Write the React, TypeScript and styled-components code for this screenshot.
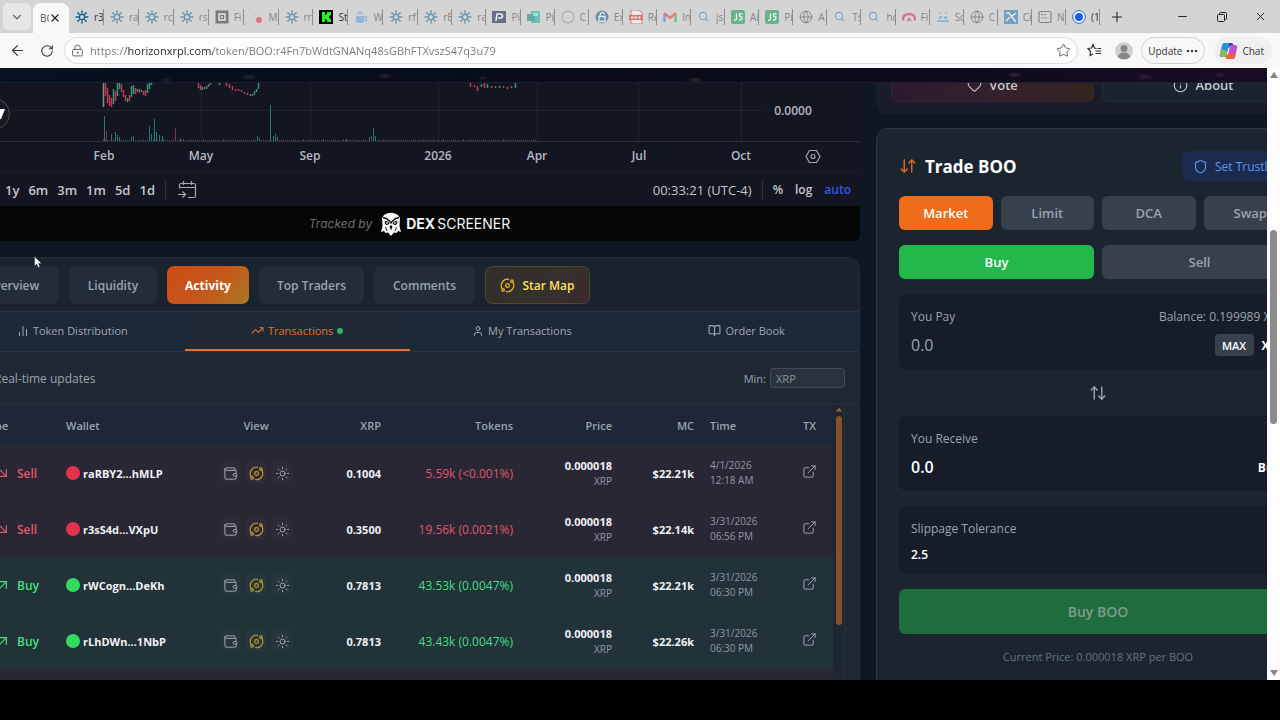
import React from 'react';
import styled, { createGlobalStyle, css } from 'styled-components';
import {
  ArrowDownRight, ArrowDownUp, ArrowLeft, ArrowUpDown, ArrowUpRight, BookOpen, ChartNoAxesColumn,
  ChevronDown, ExternalLink, Globe, Heart, Info, LockKeyhole, Minus, Orbit, Plus, RotateCw, Search,
  Shield, Star, Sun, TrendingUp, User, Wallet, X,
} from 'lucide-react';

const Global = createGlobalStyle`
  *, *::before, *::after { box-sizing: border-box; }
  body { margin: 0; background: #000; font-family: 'Open Sans', 'Noto Sans', sans-serif; }
  button, input { font-family: inherit; margin: 0; }
  button { border: 0; padding: 0; background: none; color: inherit; cursor: pointer; }
  svg { display: block; flex: none; }
`;

/* ---------- window ---------- */

const Desktop = styled.div`
  height: 100vh;
  padding-bottom: 40px;
  background: #000;
  overflow: hidden;
`;
const Window = styled.div`
  height: 100%;
  display: flex;
  flex-direction: column;
  overflow: hidden;
`;
const TabStrip = styled.div`
  flex: none;
  display: flex;
  align-items: stretch;
  height: 33px;
  padding-left: 3px;
  background: #d4d4d4;
`;
const TabMenu = styled.button`
  flex: none;
  width: 28px;
  height: 27px;
  margin: 3px 2px 0 0;
  border-radius: 5px;
  background: #e6e6e6;
  color: #333;
  display: grid;
  place-items: center;
`;
const TabLabel = styled.span`
  font-size: 10px;
  line-height: 16px;
  overflow: hidden;
  white-space: nowrap;
`;
const ActiveTab = styled.div`
  flex: none;
  width: 36px;
  margin-top: 3px;
  padding: 0 8px 0 7px;
  display: flex;
  align-items: center;
  justify-content: space-between;
  border-radius: 8px 8px 0 0;
  background: #f8f8f8;
  color: #555;
  ${TabLabel} { width: 9px; }
`;
const Tabs = styled.div`
  flex: 1;
  min-width: 0;
  display: flex;
`;
const Tab = styled.button<{ $grow: number; $awake?: boolean }>`
  flex: ${p => p.$grow} 1 0;
  min-width: 0;
  display: flex;
  align-items: center;
  padding-left: 6px;
  color: ${p => (p.$awake ? '#333' : '#858585')};
  > svg { opacity: ${p => (p.$awake ? 1 : 0.55)}; }
  ${TabLabel} {
    flex: 1;
    margin-left: 5px;
    border-right: 1px solid #8e8e8e;
    text-align: left;
  }
`;
const WindowButtons = styled.div`
  flex: none;
  display: flex;
  align-items: center;
  width: 180px;
  color: #222;
  button { flex: 39; height: 33px; display: grid; place-items: center; }
  button:first-child { flex: 34; margin-right: 29px; }
`;
const Toolbar = styled.div`
  flex: none;
  display: flex;
  align-items: center;
  height: 35px;
  padding: 0 8px 0 9px;
  background: #f8f8f8;
  color: #333;
`;
const ToolButton = styled.button`
  width: 16px;
  height: 24px;
  margin-right: 14px;
  display: grid;
  place-items: center;
`;
const Address = styled.label`
  flex: 1;
  display: flex;
  align-items: center;
  gap: 6px;
  height: 27px;
  padding: 0 6px;
  border: 1px solid #dcdcdc;
  border-radius: 14px;
  background: #fdfdfd;
  color: #666;
  margin: 0 9px 0 -5px;
`;
const AddressInput = styled.input`
  flex: 1;
  border: 0;
  outline: 0;
  padding: 0;
  font-size: 11px;
  height: 20px;
  color: #666;
  background: linear-gradient(to right, #777 0 36px, #222 36px 123px, #777 123px);
  -webkit-background-clip: text;
  background-clip: text;
  -webkit-text-fill-color: transparent;
`;
const ProfileTools = styled.div`
  display: flex;
  align-items: center;
  gap: 13px;
`;
const Pill = styled.button<{ $outlined?: boolean }>`
  height: 27px;
  display: flex;
  align-items: center;
  gap: 4px;
  border-radius: 14px;
  font-size: 10px;
  color: #333;
  ${p => (p.$outlined
    ? css`border: 1px solid #cfcfcf; margin: 0 9px 0 8px; padding: 0 6px;`
    : css`background: #f0f0f0; padding: 0 8px 0 5px;`)}
`;

/* ---------- page ---------- */

const Viewport = styled.div`
  flex: 1;
  min-height: 0;
  display: flex;
`;
const Page = styled.main`
  flex: 1;
  min-width: 0;
  overflow: hidden;
  background: #0e1724;
  color: #9ca3af;
`;
const SiteHeader = styled.div`
  height: 15px;
  border-bottom: 1px solid #1b2130;
  background:
    radial-gradient(ellipse 9px 3px at 250px 9px, #242838, transparent),
    radial-gradient(ellipse 7px 3px at 166px 12px, #1c2434, transparent),
    radial-gradient(ellipse 8px 3px at 385px 8px, #2a272e, transparent),
    radial-gradient(ellipse 8px 3px at 695px 12px, #3a2c2a, transparent),
    radial-gradient(ellipse 6px 2px at 483px 10px, #22242f, transparent),
    radial-gradient(ellipse 8px 3px at 1014px 7px, #36243c, transparent),
    radial-gradient(ellipse 10px 4px at 1145px 9px, #301f36, transparent),
    radial-gradient(ellipse 6px 3px at 1220px 7px, #321f36, transparent),
    linear-gradient(to right, #07111f, #080c19 45%, #0c0a1a 70%, #190d24);
`;
const Columns = styled.div`
  display: flex;
  gap: 16px;
  margin: 0 -53px 0 -41px;
`;
const MainColumn = styled.div`
  flex: 1;
  min-width: 0;
`;
const SideColumn = styled.aside`
  flex: none;
  width: 444px;
`;

/* chart */
const ChartFrame = styled.section`
  background: #131520;
  border-radius: 0 0 6px 6px;
  overflow: hidden;
`;
const ChartSvg = styled.svg`
  width: 100%;
  height: 89px;
  text { font-family: 'Open Sans', sans-serif; font-size: 12px; font-weight: 600; fill: #b5b8c1; text-anchor: middle; }
`;
const RangeBar = styled.div`
  display: flex;
  align-items: center;
  height: 34px;
  padding: 0 9px 0 46px;
  border-top: 1px solid #1d202b;
  font-size: 13px;
  font-weight: 500;
  color: #c2c5cd;
`;
const RangeSet = styled.div`
  display: flex;
  gap: 9px;
`;
const RangeButton = styled.button`
  font-size: 13px;
  font-weight: 600;
`;
const ScaleSet = styled.div`
  display: flex;
  align-items: center;
  gap: 12px;
`;
const ScaleButton = styled.button<{ $active?: boolean }>`
  font-size: 12px;
  font-weight: 600;
  color: ${p => (p.$active ? '#3558e8' : 'inherit')};
`;
const Divider = styled.span`
  width: 1px;
  height: 20px;
  margin: 0 10px;
  background: #2d303b;
`;
const Spring = styled.span`flex: 1;`;
const Tracked = styled.div`
  display: flex;
  align-items: center;
  justify-content: center;
  height: 35px;
  background: #050505;
  font-family: Inter, sans-serif;
  font-size: 14px;
  color: #f4f4f4;
  em { font-size: 12px; color: #6f6f6f; margin-right: 9px; }
  svg { margin-right: 5px; }
  span { margin-left: 2px; }
`;

/* activity card */
const Card = styled.section`
  margin-top: 16px;
  border: 1px solid #212e3a;
  border-radius: 12px 12px 0 0;
  background: #1e2832;
  overflow: hidden;
`;
const SectionTabs = styled.nav`
  display: grid;
  grid-template-columns: 94px 88px 82px 105px 101px 105px;
  gap: 10px;
  height: 54px;
  padding: 8px 5px;
  background: #1a242f;
  border-bottom: 1px solid #2a3541;
`;
const SectionTab = styled.button<{ $look?: 'active' | 'star' }>`
  height: 38px;
  display: flex;
  align-items: center;
  justify-content: center;
  gap: 7px;
  border-radius: 7px;
  font-size: 12px;
  font-weight: 600;
  white-space: nowrap;
  background: #232d39;
  color: #9aa2ae;
  ${p => p.$look === 'active' && css`background: linear-gradient(135deg, #cf4a15, #c4581c 55%, #a87a22); color: #fff; font-weight: 700;`}
  ${p => p.$look === 'star' && css`background: linear-gradient(135deg, #322e2b, #34312c 60%, #3d292d); border: 1px solid #4c4632; color: #fbe068; svg { color: #e8b31a; }`}
`;
const SubTabs = styled.nav`
  display: grid;
  grid-template-columns: repeat(4, 1fr);
  height: 40px;
  background: #1c2737;
  border-bottom: 1px solid #2a3440;
`;
const SubTab = styled.button<{ $active?: boolean }>`
  display: flex;
  align-items: center;
  justify-content: center;
  gap: 4px;
  font-size: 11px;
  font-weight: 500;
  color: #a0a8b5;
  border-bottom: 2px solid transparent;
  ${p => p.$active && css`background: #1f2935; color: #e0712a; border-color: #d9733a;`}
`;
const LiveDot = styled.i`
  width: 6px;
  height: 6px;
  border-radius: 50%;
  background: #32b460;
`;
const Filter = styled.div`
  display: flex;
  align-items: center;
  justify-content: space-between;
  height: 53px;
  padding: 0 14px 0 34px;
  font-size: 12px;
  border-bottom: 1px solid #28323c;
  label { display: flex; align-items: center; gap: 4px; font-size: 11px; }
  input {
    width: 75px;
    height: 20px;
    padding: 0 5px;
    border: 1px solid #414b57;
    border-radius: 3px;
    background: #28333e;
    font-size: 11px;
    color: #ddd;
  }
  input::placeholder { color: #8b939f; opacity: 1; }
`;
const TableArea = styled.div`
  display: flex;
  padding: 0 14px 0 15px;
`;
const Table = styled.table`
  flex: 1;
  min-width: 0;
  table-layout: fixed;
  border-collapse: collapse;
  font-size: 11px;
  font-weight: 600;
`;
const Th = styled.th<{ $align?: string; $w?: number }>`
  width: ${p => (p.$w ? `${p.$w}px` : 'auto')};
  height: 40px;
  padding: 0 8px;
  background: #1d2737;
  text-align: ${p => p.$align || 'left'};
  font-weight: 600;
`;
const Row = styled.tr<{ $side: Side }>`
  height: 56px;
  background: ${p => (p.$side === 'Buy' ? '#213239' : '#2a2734')};
`;
const Td = styled.td<{ $align?: string; $color?: string; $bold?: boolean }>`
  padding: 0 8px;
  text-align: ${p => p.$align || 'left'};
  color: ${p => p.$color || '#f1f3f5'};
  font-weight: ${p => (p.$bold ? 700 : 600)};
  white-space: nowrap;
`;
const TypeCell = styled.span`
  display: flex;
  align-items: center;
  gap: 6px;
  padding-left: 12px;
  font-size: 12px;
`;
const WalletCell = styled.span`
  display: flex;
  align-items: center;
  gap: 3px;
`;
const ViewCell = styled.span`
  display: flex;
  align-items: center;
  justify-content: center;
  gap: 4px;
`;
const TokenAmount = styled.span`
  font-size: 12px;
  font-weight: 500;
`;
const WalletDot = styled.i<{ $side: Side }>`
  width: 14px;
  height: 14px;
  border-radius: 50%;
  background: ${p => (p.$side === 'Buy' ? '#2fdc5d' : '#e3334a')};
`;
const ViewButton = styled.button<{ $gold?: boolean }>`
  flex: none;
  width: 22px;
  height: 22px;
  display: grid;
  place-items: center;
  border-radius: 5px;
  background: rgba(255, 255, 255, 0.02);
  color: ${p => (p.$gold ? '#c99f26' : '#a3a9b4')};
`;
const Stack = styled.span`
  display: block;
  font-size: 10px;
  font-weight: 400;
  line-height: 15px;
  color: #9299a6;
  strong { display: block; font-size: 11px; line-height: 17px; font-weight: 700; color: #f1f3f5; }
`;
const TxLink = styled.a`
  display: inline-block;
  vertical-align: middle;
  margin-bottom: 4px;
  color: #9aa2ae;
`;
const TableScroll = styled.div`
  width: 12px;
  padding-left: 3px;
  border-right: 1px solid #263140;
  background: #1c2731;
`;
const TableThumb = styled.div`
  width: 6px;
  height: 209px;
  margin-top: 4px;
  border-radius: 3px;
  background: #87502a;
`;

/* side column */
const ActionCard = styled.section`
  display: flex;
  align-items: flex-end;
  gap: 8px;
  height: 31px;
  padding: 0 15px 12px;
  border-radius: 0 0 10px 10px;
  background: #191c2a;
  overflow: hidden;
`;
const ActionButton = styled.button<{ $accent?: boolean }>`
  flex: 1;
  height: 34px;
  display: flex;
  align-items: center;
  justify-content: center;
  gap: 7px;
  border: 1px solid ${p => (p.$accent ? '#3a2430' : '#222b38')};
  border-radius: 6px;
  font-size: 13px;
  font-weight: 600;
  color: #c6c9d0;
  background: ${p => (p.$accent ? 'linear-gradient(to right, #2b1a2f, #36202b 60%, #33241f)' : '#1b2230')};
`;
const TradeCard = styled.section`
  margin-top: 14px;
  padding: 22px;
  border: 1px solid #2a3641;
  border-radius: 12px;
  background: #1b2530;
  min-height: 600px;
`;
const TradeHead = styled.header`
  display: flex;
  align-items: center;
  justify-content: space-between;
  height: 30px;
  margin-bottom: 15px;
  h2 { display: flex; align-items: center; gap: 8px; margin: 0; font-size: 17px; font-weight: 700; color: #fff; }
  h2 svg { color: #ea6a20; }
`;
const TrustButton = styled.button`
  display: flex;
  align-items: center;
  gap: 7px;
  width: 115px;
  height: 30px;
  padding-left: 11px;
  border-radius: 6px;
  background: #1b2a4e;
  font-size: 12px;
  color: #5c9bef;
  white-space: nowrap;
`;
const Segments = styled.div`
  display: flex;
  gap: 8px;
  margin-bottom: 15px;
`;
const Segment = styled.button<{ $tone?: string }>`
  flex: 1;
  height: 34px;
  border-radius: 6px;
  font-size: 13px;
  font-weight: 600;
  background: ${p => p.$tone || '#37404d'};
  color: ${p => (p.$tone ? '#fff' : '#9aa2af')};
`;
const Field = styled.div`
  display: flex;
  flex-direction: column;
  gap: 9px;
  padding: 12px 12px 14px;
  border-radius: 8px;
  background: #161c28;
  font-size: 12px;
`;
const Slippage = styled(Field)`
  margin-top: 15px;
  padding-bottom: 10px;
  gap: 6px;
`;
const FieldRow = styled.div`
  display: flex;
  align-items: center;
  justify-content: space-between;
  gap: 8px;
  height: 20px;
  b { color: #fff; font-weight: 700; }
`;
const Amount = styled.input<{ $small?: boolean }>`
  flex: 1;
  min-width: 0;
  height: 24px;
  padding: 0;
  border: 0;
  outline: 0;
  background: none;
  color: #fff;
  font-size: ${p => (p.$small ? 12 : 16)}px;
  font-weight: 600;
  &::placeholder { color: #9ca3af; opacity: 1; font-weight: 400; }
`;
const MaxButton = styled.button`
  width: 39px;
  height: 22px;
  border-radius: 4px;
  background: #37404d;
  color: #fff;
  font-size: 11px;
  font-weight: 600;
`;
const SwapButton = styled.button`
  display: grid;
  place-items: center;
  width: 100%;
  height: 47px;
  color: #a3a9b4;
`;
const Submit = styled.button`
  width: 100%;
  height: 45px;
  margin: 15px 0;
  border-radius: 6px;
  background: #1f6d3d;
  color: #7f9c8b;
  font-size: 14px;
  font-weight: 600;
`;
const PriceNote = styled.p`
  margin: 0;
  text-align: center;
  font-size: 11px;
  line-height: 16px;
  color: #677080;
`;

/* page scrollbar */
const PageScroll = styled.div`
  flex: none;
  display: flex;
  flex-direction: column;
  align-items: center;
  width: 13px;
  padding: 4px 0;
  background: #fdfdfd;
`;
const PageThumb = styled.div`
  width: 7px;
  height: 194px;
  margin: 152px 0 auto;
  border-radius: 4px;
  background: #8b8b8b;
`;
const Pointer = styled.svg`
  position: absolute;
  left: 34px;
  top: 256px;
`;

/* ---------- data ---------- */

type Side = 'Buy' | 'Sell';
type Trade = { side: Side; wallet: string; xrp: string; tokens: string; mc: string; date: string; time: string };
const TRADES: Trade[] = [
  { side: 'Sell', wallet: 'raRBY2...hMLP', xrp: '0.1004', tokens: '5.59k (<0.001%)', mc: '$22.21k', date: '4/1/2026', time: '12:18 AM' },
  { side: 'Sell', wallet: 'r3sS4d...VXpU', xrp: '0.3500', tokens: '19.56k (0.0021%)', mc: '$22.14k', date: '3/31/2026', time: '06:56 PM' },
  { side: 'Buy', wallet: 'rWCogn...DeKh', xrp: '0.7813', tokens: '43.53k (0.0047%)', mc: '$22.21k', date: '3/31/2026', time: '06:30 PM' },
  { side: 'Buy', wallet: 'rLhDWn...1NbP', xrp: '0.7813', tokens: '43.43k (0.0047%)', mc: '$22.26k', date: '3/31/2026', time: '06:30 PM' },
];

const BROWSER_TABS: [string, string][] = [
  ['spark', 'r3'], ['spark', 'ra'], ['spark', 'rc'], ['spark', 'rs'], ['frame', 'Fi'], ['dot', 'M'],
  ['spark', 'rr'], ['kick', 'St'], ['cup', 'W'], ['spark', 'rf'], ['spark', 'rE'], ['spark', 'ra'],
  ['park', 'Pi'], ['teal', 'Pi'], ['ring', 'C'], ['lock', 'Ex'], ['pdf', 'Re'], ['mail', 'In'],
  ['search', 'js'], ['js', 'Ai'], ['js', 'Pi'], ['globe', 'A'], ['search', 'Ts'], ['search', 'ho'],
  ['arch', 'Fi'], ['people', 'Sc'], ['globe', 'C'], ['cross', 'Ci'], ['note', 'N'], ['record', '(1'],
];
const AWAKE = ['r3', 'St', '(1'];

function Favicon({ kind }: { kind: string }) {
  if (kind === 'globe') return <Globe size={14} color="#444" strokeWidth={1.6} />;
  return (
    <svg width="14" height="14" viewBox="0 0 14 14" fill="none">
      {kind === 'search' && <Search x={1} y={1} size={11} color="#2f7fc4" strokeWidth={2.4} />}
      {kind === 'spark' && (
        <g stroke="#17608f" strokeWidth="1.3">
          <circle cx="7" cy="7" r="2.6" />
          {[0, 45, 90, 135, 180, 225, 270, 315].map(a => (
            <path key={a} d="M7 4.2V1.2M6.2 1.2h1.6" transform={`rotate(${a} 7 7)`} />
          ))}
        </g>
      )}
      {kind === 'frame' && <><rect x="0.5" y="0.5" width="13" height="13" fill="#333" /><path d="M4 4h6v6H4zM6 7h2" stroke="#fff" strokeWidth="1.4" /></>}
      {kind === 'dot' && <><circle cx="9" cy="10" r="3" fill="#e8264d" /><circle cx="4.5" cy="5" r="1" fill="#f4a0a0" /></>}
      {kind === 'kick' && <><rect width="14" height="14" fill="#000" /><path d="M3 2h3v3h1V4h1V2h4v3h-1v1h-1v2h1v1h1v3H8v-2H7V9H6v3H3z" fill="#2bf02b" /></>}
      {kind === 'cup' && <><path d="M2 6h8v5a2 2 0 0 1-2 2H4a2 2 0 0 1-2-2z" fill="#5b9cd8" /><path d="M10 7h2.5v3.5H10M4 4.5V2M6 4V1M8 4.5V2" stroke="#5b9cd8" strokeWidth="1.3" /></>}
      {kind === 'park' && <><path d="M0 1h14v12H0z" fill="#0f1d4a" /><path d="M4 11l1-7h4.5q2 2 0 4H6" stroke="#fff" strokeWidth="1.6" /></>}
      {kind === 'teal' && <><path d="M4 1h9v12H4z" fill="#1cae9f" /><path d="M0 4h8v7H0z" fill="#0b8176" /><path d="M6 3h5v3H6z" fill="#7de0d5" /></>}
      {kind === 'ring' && <circle cx="7" cy="7" r="5.8" stroke="#8a8a8a" strokeWidth="1.2" />}
      {kind === 'lock' && <><circle cx="7" cy="7" r="6.5" fill="#1b5c86" /><path d="M4 6.5h6v5H4zM5.2 6V4.5a2 2 0 0 1 4 0" stroke="#fff" strokeWidth="1.3" /></>}
      {kind === 'pdf' && <><path d="M2 0h8l3 3v11H2z" stroke="#c33" fill="#fff" /><path d="M0 5h14v5H0z" fill="#e02424" /><path d="M2 7.5h10" stroke="#fff" strokeDasharray="2.5 1" strokeWidth="2" /></>}
      {kind === 'mail' && <><path d="M1.5 12V4" stroke="#3478e6" strokeWidth="2.4" /><path d="M12.5 12V4" stroke="#27a34c" strokeWidth="2.4" /><path d="M1 3l6 5 6-5" stroke="#e33b2e" strokeWidth="2.4" /></>}
      {kind === 'js' && <><rect width="14" height="14" rx="2" fill="#0d9a55" /><path d="M5.5 3.5v5q0 2-2.5 2M11.5 4q-3-1-3 1t2.2 2q1 3.5-2.7 3" stroke="#fff" strokeWidth="1.4" /></>}
      {kind === 'arch' && <><path d="M1 10.5V8.5a6 4.5 0 0 1 12 0v2" stroke="#e0264c" strokeWidth="2.6" /><path d="M4.5 11l2.5-4 2.5 4z" fill="#e0264c" /></>}
      {kind === 'people' && <><path d="M1 10h12v2H1zM3 6h3v3H3zM8 6h3v3H8z" fill="#58a8dc" /><path d="M3 3h2M9 3h2" stroke="#58a8dc" strokeWidth="1.5" /></>}
      {kind === 'cross' && <><rect width="14" height="14" fill="#2474b0" /><path d="M2 3h3l6 8h1M2 11l4-4M8 6l4-3" stroke="#fff" strokeWidth="1.5" /></>}
      {kind === 'note' && <><rect x="1" y="1.5" width="12" height="11" rx="1.5" stroke="#444" strokeWidth="1.2" /><path d="M3 4.5h6M3.5 8h7" stroke="#444" strokeDasharray="2 1" strokeWidth="1.2" /></>}
      {kind === 'record' && <><circle cx="7" cy="7" r="6.3" stroke="#1d5fe8" fill="#fff" /><circle cx="7" cy="7" r="4" fill="#1d5fe8" /></>}
    </svg>
  );
}

const UP = '#2d9a78';
const DOWN = '#c43854';
/* candles: x, top, bottom, colour */
const CANDLES: [number, number, number, string][] = [
  [103, 83, 107, '#7e8f86'], [105, 83, 96, DOWN], [107, 88, 103, DOWN], [109, 95, 106, DOWN], [111, 98, 107, DOWN],
  [113, 89, 104, UP], [115, 91, 101, DOWN], [117, 83, 96, UP], [119, 83, 89, UP], [121, 84, 92, DOWN],
  [123, 90, 97, DOWN], [125, 95, 101, DOWN], [127, 98, 102, UP], [129, 95, 101, DOWN], [131, 86, 97, UP],
  [133, 85, 94, UP], [135, 88, 94, DOWN], [137, 89, 92, UP], [139, 89, 93, DOWN], [141, 90, 92, UP],
  [143, 91, 95, DOWN], [145, 90, 96, DOWN], [147, 84, 93, UP], [149, 83, 89, UP], [151, 83, 85, UP],
  [198, 83, 88, DOWN], [200, 85, 90, DOWN], [202, 87, 90, UP], [204, 87, 89, DOWN], [206, 86, 89, UP],
  [208, 84, 87, UP], [210, 83, 85, DOWN], [219, 83, 85, UP], [226, 83, 86, DOWN], [229, 84, 88, DOWN],
  [232, 86, 90, DOWN], [235, 89, 91, DOWN], [238, 89, 91, DOWN], [241, 90, 92, DOWN], [244, 92, 94, DOWN],
  [247, 93, 95, DOWN], [250, 94, 96, UP], [252, 94, 96, DOWN], [254, 91, 95, UP], [256, 89, 92, UP], [258, 83, 89, UP],
  [470, 83, 87, DOWN], [474, 85, 87, DOWN], [477, 86, 91, DOWN], [481, 84, 87, UP], [484, 83, 88, DOWN],
  [487, 84, 88, UP], [491, 86, 88, DOWN], [495, 86, 88, DOWN], [499, 86, 88, UP], [503, 86, 88, DOWN],
  [507, 87, 89, UP], [511, 86, 88, DOWN], [515, 83, 88, UP],
];
/* volume bars: x, height */
const VOLUME: [number, number][] = [
  [104, 25], [106, 10], [111, 7], [115, 9], [117, 6], [119, 4], [131, 4], [133, 5], [149, 15], [151, 7],
  [154, 22], [156, 9], [159, 6], [162, 5], [175, 13], [180, 3], [257, 5], [259, 3], [270, 36], [273, 5], [275, 7], [277, 4],
  [369, 4], [371, 5], [373, 13], [375, 5], [323, 2], [346, 2],
];
const AXIS: [number, string][] = [[104, 'Feb'], [201, 'May'], [310, 'Sep'], [438, '2026'], [537, 'Apr'], [639, 'Jul'], [741, 'Oct']];

function Chart() {
  return (
    <ChartSvg viewBox="-41 83 901 89">
      <path d="M-41 110.5H763M201.5 83V141M310.5 83V141M438.5 83V141M537.5 83V141M638.5 83V141M741.5 83V141" stroke="#20232d" />
      <path d="M-41 141.5H860" stroke="#2a2d37" />
      {CANDLES.map(([x, top, bottom, color]) => (
        <path key={x} d={`M${x + 0.5} ${top}V${bottom}`} stroke={color} strokeWidth="1.5" />
      ))}
      {Array.from({ length: 217 }, (_, i) => (
        <path key={i} d={`M${103.5 + i * 2} 141v-${1 + ((i * 7) % 5 === 0 ? 1 : 0)}`} stroke={(i * 5) % 7 < 3 ? '#6d2a3c' : '#235b58'} />
      ))}
      {VOLUME.map(([x, h]) => (
        <path key={x} d={`M${x + 0.5} 141v-${h}`} stroke={x === 175 || x === 106 || x === 371 ? '#853346' : '#267a6d'} />
      ))}
      <circle cx="-6" cy="114" r="15.5" fill="#171923" stroke="#4b4e58" />
      <path d="M-4 109H5L1 119H-3z" fill="#fff" />
      {AXIS.map(([x, label]) => <text key={label} x={x} y="160">{label}</text>)}
      <text x="793" y="115">0.0000</text>
      <path d="M809.5 150.5h7l3.5 6-3.5 6h-7l-3.5-6z" fill="none" stroke="#a5a8b1" strokeWidth="1.2" />
      <circle cx="813" cy="156.5" r="2" fill="none" stroke="#a5a8b1" strokeWidth="1.2" />
    </ChartSvg>
  );
}

function Owl() {
  return (
    <svg width="20" height="24" viewBox="0 0 20 24">
      <path d="M3 3Q10-1.5 17 3l2 3-.5 8 1.5 6-3-1-1.5 2-2.5-.5L10 24l-3-3.500-2.500.5L3 19l-3 1 1.500-6L1 6z" fill="#f6f6f6" />
      <path d="M2 5.5Q6 6 9 9.5L10 11l1-1.5Q14 6 18 5.5" fill="none" stroke="#111" strokeWidth="1.3" />
      <path d="M3.5 9.5q2.5-1.5 5 1.5-1 2.5-3 2-2-1-2-3.5zM16.5 9.5q-2.5-1.5-5 1.5 1 2.5 3 2 2-1 2-3.5zM8.5 14.5L10 13l1.5 1.5L10 18.5z" fill="#111" />
      <path d="M4.5 15l1.5 4M15.5 15L14 19" stroke="#111" strokeWidth="0.9" />
      <circle cx="6" cy="10.8" r="0.9" fill="#fff" />
      <circle cx="14" cy="10.8" r="0.9" fill="#fff" />
    </svg>
  );
}

function TradeRow({ t }: { t: Trade }) {
  const tone = t.side === 'Buy' ? '#4ade80' : '#dd5a6c';
  const Arrow = t.side === 'Buy' ? ArrowUpRight : ArrowDownRight;
  return (
    <Row $side={t.side}>
      <Td $color={tone}><TypeCell><Arrow size={16} strokeWidth={1.8} />{t.side}</TypeCell></Td>
      <Td $bold><WalletCell><WalletDot $side={t.side} />{t.wallet}</WalletCell></Td>
      <Td>
        <ViewCell>
          <ViewButton aria-label="Wallet"><Wallet size={15} strokeWidth={1.6} /></ViewButton>
          <ViewButton aria-label="Star map" $gold><Orbit size={15} strokeWidth={1.8} /></ViewButton>
          <ViewButton aria-label="Bubble map"><Sun size={15} strokeWidth={1.6} /></ViewButton>
        </ViewCell>
      </Td>
      <Td $align="right" $bold>{t.xrp}</Td>
      <Td $align="right" $color={tone}><TokenAmount>{t.tokens}</TokenAmount></Td>
      <Td $align="right"><Stack><strong>0.000018</strong>XRP</Stack></Td>
      <Td $align="right" $bold>{t.mc}</Td>
      <Td><Stack>{t.date}<br />{t.time}</Stack></Td>
      <Td $align="center"><TxLink href="#tx" aria-label="Open transaction"><ExternalLink size={15} strokeWidth={1.6} /></TxLink></Td>
    </Row>
  );
}

export default function App() {
  return (
    <Desktop>
      <Global />
      <Window>
        <TabStrip>
          <TabMenu aria-label="Tab actions"><ChevronDown size={14} strokeWidth={1.8} /></TabMenu>
          <ActiveTab><TabLabel>BOO</TabLabel><X size={12} color="#222" strokeWidth={2.4} /></ActiveTab>
          <Tabs>
            {BROWSER_TABS.map(([icon, name], i) => (
              <Tab key={i} $grow={i < 10 ? 35 : 34} $awake={AWAKE.includes(name)}>
                <Favicon kind={icon} />
                <TabLabel>{name}</TabLabel>
              </Tab>
            ))}
          </Tabs>
          <WindowButtons>
            <button aria-label="New tab"><Plus size={16} strokeWidth={1.6} /></button>
            <button aria-label="Minimize"><Minus size={13} strokeWidth={1.8} /></button>
            <button aria-label="Restore">
              <svg width="10" height="10" viewBox="0 0 10 10" fill="none" stroke="#222">
                <rect x="0.5" y="2.5" width="7" height="7" rx="1" />
                <path d="M2.5 2.5V1.5a1 1 0 0 1 1-1h5a1 1 0 0 1 1 1v5a1 1 0 0 1-1 1h-1" />
              </svg>
            </button>
            <button aria-label="Close"><X size={13} strokeWidth={1.8} /></button>
          </WindowButtons>
        </TabStrip>
        <Toolbar>
          <ToolButton aria-label="Back"><ArrowLeft size={17} strokeWidth={1.6} /></ToolButton>
          <ToolButton aria-label="Reload"><RotateCw size={14} strokeWidth={1.8} /></ToolButton>
          <Address>
            <LockKeyhole size={13} strokeWidth={1.8} />
            <AddressInput aria-label="Address" defaultValue="https://horizonxrpl.com/token/BOO:r4Fn7bWdtGNANq48sGBhFTXvszS47q3u79" />
            <Star size={15} strokeWidth={1.6} />
          </Address>
          <ProfileTools>
            <svg width="15" height="15" viewBox="0 0 15 15" fill="none" stroke="#333" strokeWidth="1.2">
              <path d="M9.5 5.5L7.5 5 6 1.5 4.5 5 1 5.5 3.5 8.5 3 12.5 6 11M8.5 8H14M8.5 10.5H14M10.5 5.5H14" />
            </svg>
            <svg width="18" height="18" viewBox="0 0 18 18">
              <circle cx="9" cy="9" r="9" fill="#cfcfcf" />
              <circle cx="9" cy="6.5" r="3.5" fill="#858585" />
              <path d="M3 15a6 4.5 0 0 1 12 0 9 9 0 0 1-12 0z" fill="#858585" />
            </svg>
          </ProfileTools>
          <Pill $outlined>
            Update
            <svg width="12" height="4" viewBox="0 0 12 4" fill="#333"><circle cx="2" cy="2" r="1.2" /><circle cx="6" cy="2" r="1.2" /><circle cx="10" cy="2" r="1.2" /></svg>
          </Pill>
          <Pill>
            <svg width="19" height="18" viewBox="0 0 19 18">
              <path d="M5 1h5q2 0 2.5 2L9 13q-1 2-3 2H3q-3 0-2-3L3 3q.5-2 2-2z" fill="#2a8fe0" />
              <path d="M2 7l-1 5q-1 3 2 3h3q2 0 3-2l1-3z" fill="#7cc152" />
              <path d="M14 17H9q-2 0-2.5-2L10 5q1-2 3-2h3q3 0 2 3l-2 9q-.5 2-2 2z" fill="#c04fd6" />
              <path d="M6.5 15Q7 17 9 17h5q1.5 0 2-2l.5-3H8z" fill="#f0642f" />
              <path d="M10 1h2q2 0 2.5 2h-2Q10 3 9.5 6L8 12l2-9z" fill="#243f9c" />
              <path d="M9.5 6l1.5-1-2 7-1.5 1z" fill="#fff" />
            </svg>
            Chat
          </Pill>
        </Toolbar>
        <Viewport>
          <Page>
            <SiteHeader />
            <Columns>
              <MainColumn>
                <ChartFrame>
                  <Chart />
                  <RangeBar>
                    <RangeSet>
                      {['1y', '6m', '3m', '1m', '5d', '1d'].map(r => <RangeButton key={r}>{r}</RangeButton>)}
                    </RangeSet>
                    <Divider />
                    <button aria-label="Go to date">
                      <svg width="22" height="20" viewBox="0 0 22 20" fill="none" stroke="#a5a8b1" strokeWidth="1.2">
                        <path d="M3.5 8.5V5A1.5 1.5 0 0 1 5 3.5H18A1.5 1.5 0 0 1 19.5 5V16A1.5 1.5 0 0 1 18 17.5H12M3.5 7.5H19.5M7.5 1V5M15.5 1V5M2 14.5H9M6.5 11.5L9.5 14.5L6.5 17.5" />
                      </svg>
                    </button>
                    <Spring />
                    <span>00:33:21 (UTC-4)</span>
                    <Divider />
                    <ScaleSet>
                      <ScaleButton>%</ScaleButton>
                      <ScaleButton>log</ScaleButton>
                      <ScaleButton $active>auto</ScaleButton>
                    </ScaleSet>
                  </RangeBar>
                  <Tracked><em>Tracked by</em><Owl /><b>DEX</b><span>SCREENER</span></Tracked>
                </ChartFrame>
                <Card>
                  <SectionTabs>
                    <SectionTab>Overview</SectionTab>
                    <SectionTab>Liquidity</SectionTab>
                    <SectionTab $look="active">Activity</SectionTab>
                    <SectionTab>Top Traders</SectionTab>
                    <SectionTab>Comments</SectionTab>
                    <SectionTab $look="star"><Orbit size={15} strokeWidth={2} />Star Map</SectionTab>
                  </SectionTabs>
                  <SubTabs>
                    <SubTab><ChartNoAxesColumn size={12} strokeWidth={2} />Token Distribution</SubTab>
                    <SubTab $active><TrendingUp size={13} strokeWidth={2} />Transactions<LiveDot /></SubTab>
                    <SubTab><User size={12} strokeWidth={2} />My Transactions</SubTab>
                    <SubTab><BookOpen size={13} strokeWidth={2} />Order Book</SubTab>
                  </SubTabs>
                  <Filter>
                    <span>Real-time updates</span>
                    <label>Min:<input placeholder="XRP" /></label>
                  </Filter>
                  <TableArea>
                    <Table>
                      <thead>
                        <tr>
                          <Th $w={83}>Type</Th>
                          <Th>Wallet</Th>
                          <Th $w={82} $align="center">View</Th>
                          <Th $w={88} $align="right">XRP</Th>
                          <Th $w={132} $align="right">Tokens</Th>
                          <Th $w={99} $align="right">Price</Th>
                          <Th $w={82} $align="right">MC</Th>
                          <Th $w={84}>Time</Th>
                          <Th $w={47} $align="center">TX</Th>
                        </tr>
                      </thead>
                      <tbody>
                        {TRADES.map((t, i) => <TradeRow key={i} t={t} />)}
                        <Row $side="Sell"><Td colSpan={9} /></Row>
                      </tbody>
                    </Table>
                    <TableScroll>
                      <svg width="6" height="7" viewBox="0 0 6 7"><path d="M0 6.5L3 2.5L6 6.5z" fill="#a85c2c" /></svg>
                      <TableThumb />
                    </TableScroll>
                  </TableArea>
                </Card>
              </MainColumn>
              <SideColumn>
                <ActionCard>
                  <ActionButton $accent><Heart size={15} strokeWidth={1.8} />Vote</ActionButton>
                  <ActionButton><Info size={15} strokeWidth={1.8} />About</ActionButton>
                </ActionCard>
                <TradeCard>
                  <TradeHead>
                    <h2><ArrowDownUp size={18} strokeWidth={1.8} />Trade BOO</h2>
                    <TrustButton><Shield size={15} strokeWidth={1.8} />Set Trustline</TrustButton>
                  </TradeHead>
                  <Segments>
                    <Segment $tone="#ee6c1a">Market</Segment>
                    <Segment>Limit</Segment>
                    <Segment>DCA</Segment>
                    <Segment>Swap</Segment>
                  </Segments>
                  <Segments>
                    <Segment $tone="#22b84c">Buy</Segment>
                    <Segment>Sell</Segment>
                  </Segments>
                  <Field>
                    <FieldRow><label htmlFor="pay">You Pay</label><span>Balance: 0.199989 XRP</span></FieldRow>
                    <FieldRow><Amount id="pay" placeholder="0.0" /><MaxButton>MAX</MaxButton><b>XRP</b></FieldRow>
                  </Field>
                  <SwapButton aria-label="Swap direction"><ArrowUpDown size={18} strokeWidth={1.8} /></SwapButton>
                  <Field>
                    <FieldRow><label htmlFor="receive">You Receive</label></FieldRow>
                    <FieldRow><Amount id="receive" defaultValue="0.0" /><b>BOO</b></FieldRow>
                  </Field>
                  <Slippage>
                    <FieldRow><label htmlFor="slippage">Slippage Tolerance</label></FieldRow>
                    <FieldRow><Amount id="slippage" $small defaultValue="2.5" /></FieldRow>
                  </Slippage>
                  <Submit>Buy BOO</Submit>
                  <PriceNote>Current Price: 0.000018 XRP per BOO</PriceNote>
                </TradeCard>
              </SideColumn>
            </Columns>
          </Page>
          <PageScroll>
            <svg width="8" height="6" viewBox="0 0 8 6"><path d="M0 6L4 0L8 6z" fill="#858585" /></svg>
            <PageThumb />
            <svg width="8" height="6" viewBox="0 0 8 6"><path d="M0 0L4 6L8 0z" fill="#858585" /></svg>
          </PageScroll>
        </Viewport>
      </Window>
      <Pointer width="9" height="12" viewBox="0 0 9 12"><path d="M0.5 0.5v9.5l2.2-2 1.6 3.5 1.6-.7-1.5-3.3H7.5z" fill="#fff" stroke="#222" strokeWidth="0.4" /></Pointer>
    </Desktop>
  );
}
